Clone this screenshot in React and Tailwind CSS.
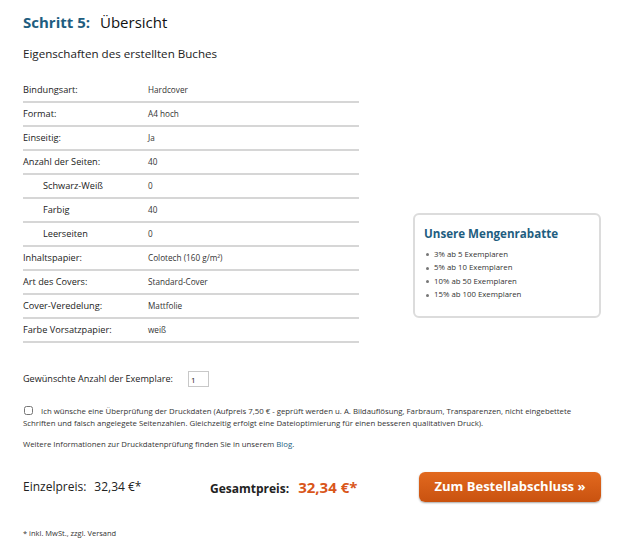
import React, { useState } from 'react';

const rows = [
  { label: 'Bindungsart:', value: 'Hardcover' },
  { label: 'Format:', value: 'A4 hoch' },
  { label: 'Einseitig:', value: 'Ja' },
  { label: 'Anzahl der Seiten:', value: '40' },
  { label: 'Schwarz-Weiß', value: '0', sub: true },
  { label: 'Farbig', value: '40', sub: true },
  { label: 'Leerseiten', value: '0', sub: true },
  { label: 'Inhaltspapier:', value: 'Colotech (160 g/m²)' },
  { label: 'Art des Covers:', value: 'Standard-Cover' },
  { label: 'Cover-Veredelung:', value: 'Mattfolie' },
  { label: 'Farbe Vorsatzpapier:', value: 'weiß' },
];

const discounts = ['3% ab 5 Exemplaren', '5% ab 10 Exemplaren', '10% ab 50 Exemplaren', '15% ab 100 Exemplaren'];

const App = () => {
  const [count, setCount] = useState('1');
  const [check, setCheck] = useState(false);

  return (
    <div className="min-h-screen bg-white text-[#222] font-['Open_Sans','Noto_Sans',sans-serif] pl-[23px] pr-6">
      {/* Header */}
      <h1 className="pt-[11px] text-[15px] leading-[23px] flex">
        <span className="font-bold text-[#1e5d80] w-[77px]">Schritt 5:</span>
        <span className="text-[#111]">Übersicht</span>
      </h1>
      <h2 className="mt-[11px] text-[11.6px] leading-[18px] text-[#222]">Eigenschaften des erstellten Buches</h2>

      <div className="flex items-start mt-[16px]">
        {/* Properties table */}
        <div className="w-[336px]">
          {rows.map((r) => (
            <div key={r.label} className="flex items-center h-[24px] border-b-2 border-[#d6d6d6]">
              <div className={`w-[125px] text-[9.2px] text-[#222] ${r.sub ? 'pl-[20px]' : ''}`}>{r.label}</div>
              <div className="text-[8.2px] text-[#333]">{r.value}</div>
            </div>
          ))}
        </div>

        {/* Discount box */}
        <div className="ml-[54px] mt-[134px] w-[188px] h-[105px] border-2 border-[#dcdcdc] rounded-[6px] px-[9px] pt-[10px]">
          <h3 className="text-[11.6px] font-bold text-[#1e5d80] leading-[18px]">Unsere Mengenrabatte</h3>
          <ul className="mt-[5px]">
            {discounts.map((d) => (
              <li key={d} className="flex items-center h-[13.5px] text-[7.8px] text-[#333]">
                <span className="w-[3px] h-[3px] rounded-full bg-[#777] ml-[2px] mr-[5px]" />
                {d}
              </li>
            ))}
          </ul>
        </div>
      </div>

      {/* Quantity */}
      <div className="flex items-center mt-[28px] h-[16px]">
        <label className="text-[9.1px] text-[#222] w-[165px]">Gewünschte Anzahl der Exemplare:</label>
        <input
          value={count}
          onChange={(e) => setCount(e.target.value)}
          className="w-[21px] h-[16px] border border-[#c8c8c8] text-[8px] px-[2px] outline-none"
        />
      </div>

      {/* Check */}
      <div className="mt-[18px] text-[7.8px] leading-[12px] text-[#333] pr-[16px]">
        <input
          type="checkbox"
          checked={check}
          onChange={() => setCheck(!check)}
          className="w-[9px] h-[9px] align-[-1px] mr-[8px] ml-[1px]"
        />
        Ich wünsche eine Überprüfung der Druckdaten (Aufpreis 7,50 € - geprüft werden u. A. Bildauflösung, Farbraum, Transparenzen, nicht eingebettete Schriften und falsch angelegete Seitenzahlen. Gleichzeitig erfolgt eine Dateioptimierung für einen besseren qualitativen Druck).
      </div>
      <p className="mt-[9px] text-[7.8px] leading-[12px] text-[#333]">
        Weitere Informationen zur Druckdatenprüfung finden Sie in unserem <a className="text-[#1e5d80]">Blog</a>.
      </p>

      {/* Prices */}
      <div className="flex items-center mt-[22px] w-[578px]">
        <div className="flex items-baseline w-[187px] text-[12px] text-[#222]">
          <span>Einzelpreis:</span>
          <span className="ml-[8px]">32,34 €*</span>
        </div>
        <div className="flex items-baseline">
          <span className="text-[12px] font-bold text-[#222]">Gesamtpreis:</span>
          <span className="ml-[9px] text-[15px] font-bold text-[#d9561a]">32,34 €*</span>
        </div>
        <button className="ml-auto w-[182px] h-[30px] rounded-[6px] bg-gradient-to-b from-[#e2691f] to-[#c9520f] shadow-[0_1px_2px_rgba(0,0,0,0.35)] text-white font-bold text-[13px]">
          Zum Bestellabschluss »
        </button>
      </div>

      <p className="mt-[26px] text-[7.5px] text-[#333]">* inkl. MwSt., zzgl. Versand</p>
    </div>
  );
};

export default App;
